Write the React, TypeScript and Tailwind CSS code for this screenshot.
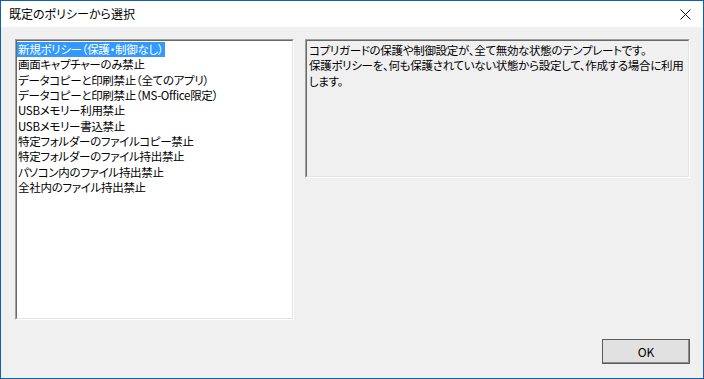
import React from "react";

const font = "font-['Meiryo_UI','Noto_Sans_CJK_JP',sans-serif]";

const items = [
  "新規ポリシー（保護・制御なし）",
  "画面キャプチャーのみ禁止",
  "データコピーと印刷禁止（全てのアプリ）",
  "データコピーと印刷禁止（MS-Office限定）",
  "USBメモリー利用禁止",
  "USBメモリー書込禁止",
  "特定フォルダーのファイルコピー禁止",
  "特定フォルダーのファイル持出禁止",
  "パソコン内のファイル持出禁止",
  "全社内のファイル持出禁止",
];

const Sunken: React.FC<{ className?: string; children?: React.ReactNode }> = ({ className, children }) => (
  <div className={"border border-t-[#a0a0a0] border-l-[#a0a0a0] border-b-white border-r-white " + (className ?? "")}>
    <div className="h-full w-full overflow-hidden border border-t-[#696969] border-l-[#696969] border-b-[#e3e3e3] border-r-[#e3e3e3]">
      {children}
    </div>
  </div>
);

const App: React.FC = () => {
  return (
    <div className={`w-[704px] h-[379px] flex flex-col border border-[#1160a8] bg-[#f0f0f0] text-[11.5px] tracking-[-0.3px] text-black ${font} [font-feature-settings:'palt']`}>
      <div className="h-[26px] shrink-0 bg-white flex items-center justify-between pl-[8px] pr-[12px]">
        <span className="leading-none text-[12px] tracking-normal">既定のポリシーから選択</span>
        <svg width="11" height="11" viewBox="0 0 11 11" className="mt-[1px]">
          <path d="M0.5 0.5L10.5 10.5M10.5 0.5L0.5 10.5" stroke="#111" strokeWidth="1" />
        </svg>
      </div>

      <div className="flex flex-col pl-[14px] pr-[13px] pt-[12px]">
        <div className="flex gap-[11px]">
          <Sunken className="w-[279px] h-[281px] bg-white">
            <ul className="pt-[1px] pl-0">
              {items.map((t, i) => (
                <li
                  key={t}
                  className={
                    "h-[15.33px] leading-[15.33px] whitespace-nowrap w-fit pr-[2px] pl-[1px] " +
                    (i === 0 ? "bg-[#3399ff] text-white" : "")
                  }
                >
                  {t}
                </li>
              ))}
            </ul>
          </Sunken>

          <Sunken className="w-[385px] h-[139px]">
            <div className="pt-[2px] pl-[2px] leading-[15.33px] whitespace-nowrap">
              <p>コプリガードの保護や制御設定が、全て無効な状態のテンプレートです。</p>
              <p>保護ポリシーを、何も保護されていない状態から設定して、作成する場合に利用</p>
              <p>します。</p>
            </div>
          </Sunken>
        </div>

        <div className="flex justify-end mt-[19px]">
          <button className="w-[88px] h-[25px] border border-[#5c5c5c] bg-[#e1e1e1] shadow-[inset_-1px_-1px_0_#8a8a8a] flex items-center justify-center">
            <span className="leading-none text-[12px] tracking-normal">OK</span>
          </button>
        </div>
      </div>
    </div>
  );
};

export default App;
